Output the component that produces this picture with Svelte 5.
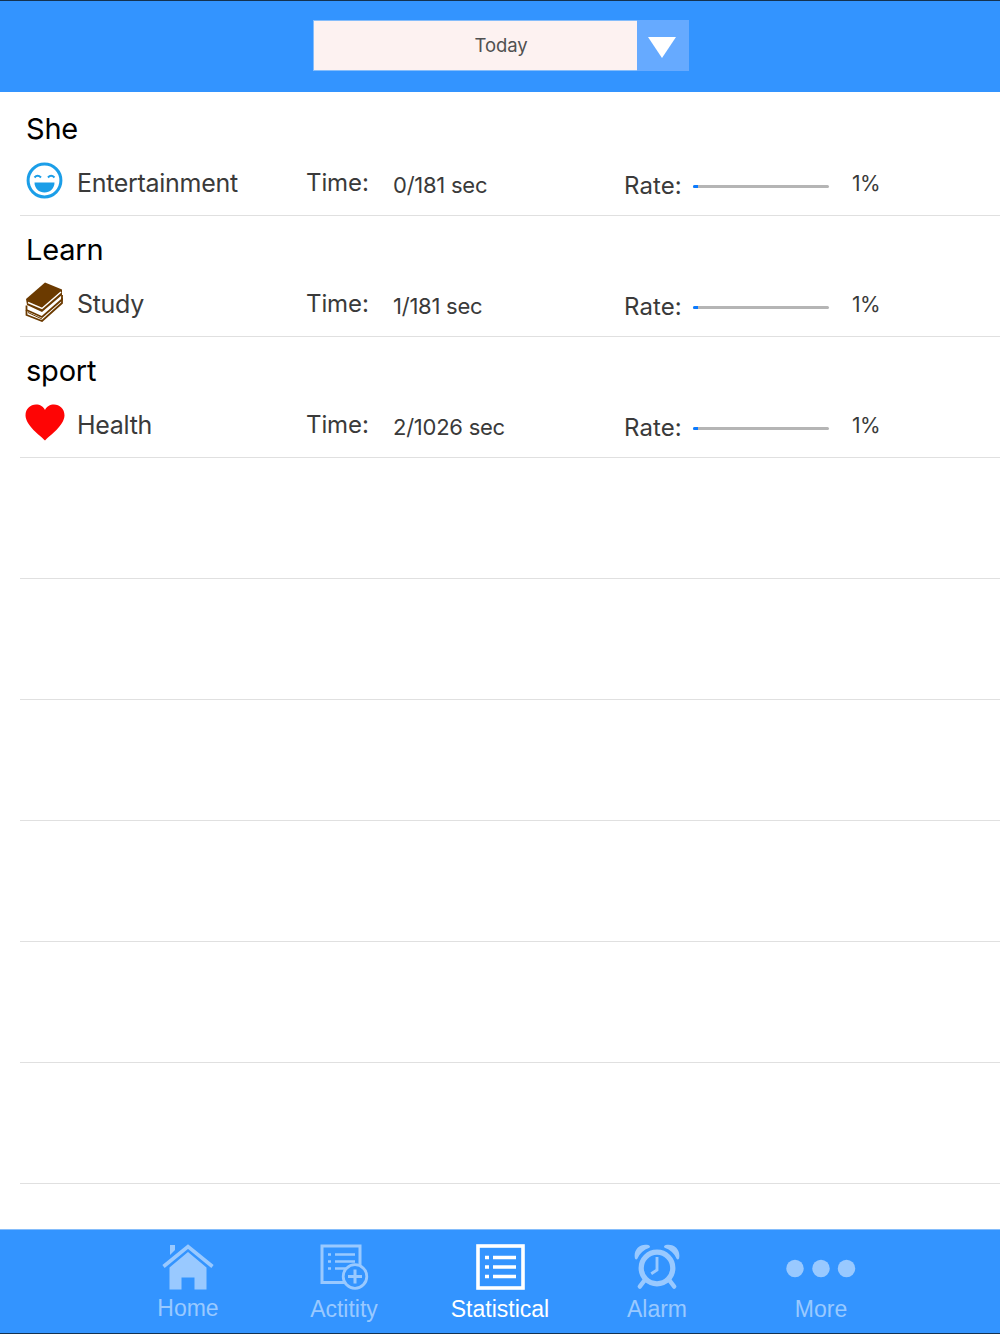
<script>
  const rows = [
    { title: 'She', icon: 'face', label: 'Entertainment', time: '0/181 sec' },
    { title: 'Learn', icon: 'book', label: 'Study', time: '1/181 sec' },
    { title: 'sport', icon: 'heart', label: 'Health', time: '2/1026 sec' },
    null, null, null, null, null, null
  ];
</script>

<div class="page">
  <header class="header">
    <div class="select">
      <div class="select-text">Today</div>
      <div class="select-btn">
        <svg width="28" height="21" viewBox="0 0 28 21"><path d="M0 0H28L14 21Z" fill="#fff"/></svg>
      </div>
    </div>
  </header>

  <main class="list">
    {#each rows as row}
      <div class="row">
        {#if row}
          <div class="title">{row.title}</div>
          <div class="line">
            <div class="icon">
              {#if row.icon === 'face'}
                <svg width="38" height="38" viewBox="0 0 38 38">
                  <circle cx="19.500" cy="18.500" r="16.400" fill="none" stroke="#1b9ee8" stroke-width="3"/>
                  <path d="M9.500 15.500q3-3.500 6.500 0M23 15.500q3-3.500 6.500 0" fill="none" stroke="#1b9ee8" stroke-width="2"/>
                  <path d="M9.500 20.500H29.500C29.500 26.500 25 30.500 19.500 30.500S9.500 26.500 9.500 20.500Z" fill="#1b9ee8"/>
                </svg>
              {:else if row.icon === 'book'}
                <svg width="38" height="40" viewBox="0 0 38 40">
                  <path d="M1 17 20 0.500 37 7.500V13L17 30 2 23Z" fill="#6b3a00"/>
                  <path d="M3 20.500 17 26.500 36 10" fill="none" stroke="#fff" stroke-width="1.500"/>
                  <path d="M37 13V17.500L17 35 1.500 28V23.500" fill="none" stroke="#6b3a00" stroke-width="1.800"/>
                  <path d="M1.500 28V33L17 39 37 21V16" fill="none" stroke="#6b3a00" stroke-width="1.800"/>
                  <path d="M3 30.500 17 37" fill="none" stroke="#6b3a00" stroke-width="1"/>
                </svg>
              {:else}
                <svg width="40" height="37" viewBox="0 0 40 37">
                  <path d="M20 36.500C15 31 1 22 .5 11.500 .5 4.500 5.500 .5 11 .5 15 .5 18.500 2.500 20 6 21.500 2.500 25 .5 29 .5 34.500 .5 39.500 4.500 39.500 11.500 39 22 25 31 20 36.500Z" fill="#fe0505"/>
                </svg>
              {/if}
            </div>
            <div class="label">{row.label}</div>
            <div class="time-k">Time:</div>
            <div class="time-v">{row.time}</div>
            <div class="rate-k">Rate:</div>
            <div class="bar"><div class="fill"></div></div>
            <div class="pct">1%</div>
          </div>
        {/if}
      </div>
    {/each}
  </main>

  <nav class="tabs">
    <div class="tab">
      <svg width="52" height="46" viewBox="0 0 52 46">
        <path d="M8 1H13V6L8 11Z" fill="currentColor"/>
        <path d="M1.500 22.500 26 2.500 50.500 22.500" fill="none" stroke="currentColor" stroke-width="3.600"/>
        <path fill-rule="evenodd" d="M7.500 23.500 26 8 44.500 23.500V45.500H32.500V33.500H19.500V45.500H7.500Z" fill="currentColor"/>
      </svg>
      <span class="home-l">Home</span>
    </div>
    <div class="tab">
      <svg width="49" height="46" viewBox="0 0 49 46">
        <path d="M24 38.500H2V2H40V22" fill="none" stroke="currentColor" stroke-width="3"/>
        <path d="M8 10.500h3M8 17.500h3M8 24.500h3M15 10.500h20M15 17.500h20M15 24.500h11" fill="none" stroke="currentColor" stroke-width="2.500"/>
        <circle cx="35" cy="32.500" r="11.800" fill="none" stroke="currentColor" stroke-width="2.800"/>
        <path d="M35 25.500V39.500M28 32.500H42" fill="none" stroke="currentColor" stroke-width="3"/>
      </svg>
      <span>Actitity</span>
    </div>
    <div class="tab active">
      <svg width="49" height="46" viewBox="0 0 49 46">
        <rect x="2" y="2" width="45" height="42" fill="none" stroke="currentColor" stroke-width="3.600"/>
        <path d="M9 13.500h4M9 23h4M9 32.500h4M17 13.500h23M17 23h23M17 32.500h23" fill="none" stroke="currentColor" stroke-width="3.600"/>
      </svg>
      <span>Statistical</span>
    </div>
    <div class="tab">
      <svg width="48" height="46" viewBox="0 0 48 48">
        <path d="M1 15C-1 6 6-1 15 1 17 2 17 3 16 4 10 6 6 10 3.500 15.500 2.500 16.500 1.500 16 1 15ZM47 15C49 6 42-1 33 1 31 2 31 3 32 4 38 6 42 10 44.500 15.500 45.500 16.500 46.500 16 47 15Z" fill="currentColor"/>
        <circle cx="24" cy="25" r="16.500" fill="none" stroke="currentColor" stroke-width="5.500"/>
        <path d="M24 13.500V27L18 31" fill="none" stroke="currentColor" stroke-width="3"/>
        <path d="M11 38 6 44.500M37 38 42 44.500" fill="none" stroke="currentColor" stroke-width="4.500" stroke-linecap="round"/>
      </svg>
      <span>Alarm</span>
    </div>
    <div class="tab">
      <svg width="70" height="46" viewBox="0 0 70 46">
        <circle cx="9" cy="24.500" r="8.700" fill="currentColor"/>
        <circle cx="35" cy="24.500" r="8.700" fill="currentColor"/>
        <circle cx="60.500" cy="24.500" r="8.700" fill="currentColor"/>
      </svg>
      <span>More</span>
    </div>
  </nav>
</div>

<style>
  :global(body) { margin: 0; background: #fff; }
  .page {
    width: 1000px;
    height: 1334px;
    display: flex;
    flex-direction: column;
    font-family: Inter, "Noto Sans", sans-serif;
    overflow: hidden;
  }
  .header {
    height: 92px;
    box-sizing: border-box;
    background: #3394ff;
    border-top: 1px solid #14324f;
    padding: 19px 0 0 313px;
    flex: none;
  }
  .select {
    width: 376px;
    height: 51px;
    box-sizing: border-box;
    display: flex;
    border: 1px solid #85bdfb;
    background: #fdf2f1;
  }
  .select-text {
    flex: 1;
    text-align: center;
    font-size: 18.500px;
    line-height: 49px;
    color: #505050;
    padding-left: 51px;
    letter-spacing: -0.1px;
  }
  .select-btn {
    width: 52px;
    flex: none;
    margin: -1px -1px -1px 0;
    background: #66aaff;
    display: flex;
    justify-content: center;
    padding: 17px 2px 0 0;
    box-sizing: border-box;
    height: 51px;
  }
  .list {
    flex: 1;
    padding: 3px 0 0 20px;
  }
  .row {
    height: 120px;
    border-bottom: 1px solid #e0e0e0;
  }
  .title {
    padding: 16px 0 0 6px;
    font-size: 29px;
    line-height: 36px;
    color: #000;
    letter-spacing: -0.2px;
    height: 49px;
  }
  .line {
    display: flex;
    align-items: flex-start;
    height: 55px;
    color: #3a3a3a;
  }
  .icon {
    width: 57px;
    padding-left: 5px;
    box-sizing: border-box;
    flex: none;
    height: 41px;
    display: flex;
    align-items: center;
  }
  .label { width: 229px; font-size: 25px; line-height: 30px; padding-top: 8px; letter-spacing: -0.3px; }
  .time-k { width: 87px; font-size: 24px; line-height: 30px; padding-top: 8px; letter-spacing: -0.1px; }
  .time-v { width: 231px; font-size: 22px; line-height: 30px; padding-top: 10px; letter-spacing: -0.25px; }
  .rate-k { width: 69px; font-size: 24px; line-height: 30px; padding-top: 11px; letter-spacing: 0.1px; }
  .bar {
    width: 136px;
    height: 3px;
    margin-top: 25px;
    background: #b5b5b5;
    border-radius: 2px;
    overflow: hidden;
  }
  .fill { width: 5px; height: 3px; background: #0a7aff; }
  .pct { margin-left: 23px; font-size: 21px; line-height: 30px; padding-top: 9px; letter-spacing: -0.6px; }
  .tabs {
    height: 105px;
    box-sizing: border-box;
    flex: none;
    background: #3394ff;
    border-top: 1px solid #85bdfb;
    border-bottom: 1px solid #14324f;
    display: grid;
    grid-template-columns: 156px 156px 156px 158px 170px;
    padding-left: 110px;
    font-family: "Liberation Sans", Arial, sans-serif;
    color: #99c9ff;
  }
  .tab {
    display: flex;
    flex-direction: column;
    align-items: center;
    padding-top: 14px;
    font-size: 23px;
    line-height: 26px;
  }
  .tab svg { display: block; height: 46px; }
  .tab span { margin-top: 6px; }
  .tab .home-l { margin-top: 5px; }
  .active { color: #fff; }
</style>
